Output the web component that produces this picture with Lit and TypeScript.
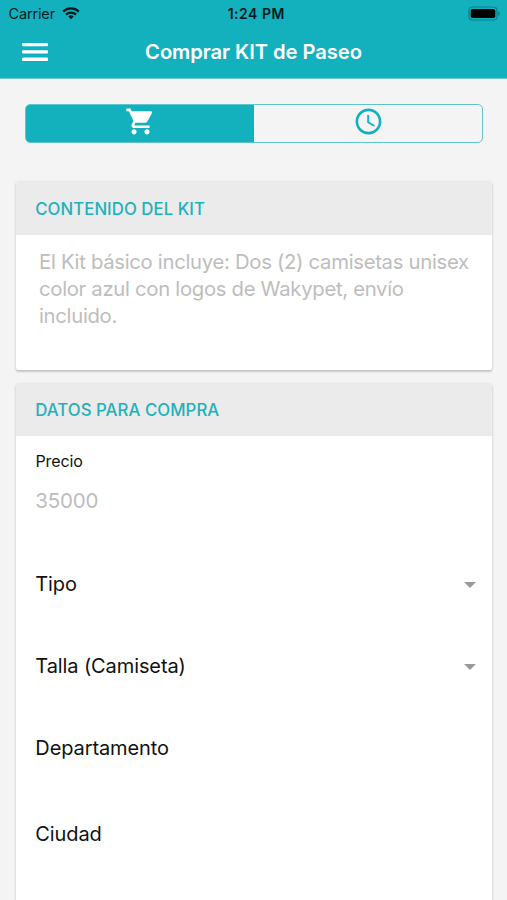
import { LitElement, html, css } from "lit";
import { customElement, property } from "lit/decorators.js";

@customElement("status-bar")
class StatusBar extends LitElement {
  static styles = css`
    :host {
      display: grid;
      grid-template-columns: 1fr auto 1fr;
      align-items: center;
      height: 27px;
      margin-bottom: 1px;
      padding: 0 6px 0 8.5px;
      font-size: 14.5px;
      color: #04191c;
    }
    .left { display: flex; align-items: center; gap: 7px; letter-spacing: -0.15px; }
    .time { font-weight: 600; font-size: 14px; letter-spacing: 0.5px; margin-left: 3px; }
    .right { display: flex; justify-content: flex-end; }
    svg { display: block; }
  `;
  render() {
    return html`
      <div class="left">
        <span>Carrier</span>
        <svg width="18" height="13" viewBox="0 0 18 13" fill="none" stroke="currentColor" stroke-width="2.3">
          <path d="M1.2 4.6a11.2 11.2 0 0 1 15.6 0" />
          <path d="M4 7.6a7.2 7.2 0 0 1 10 0" />
          <path d="M9 12.3 6.3 9.6a3.9 3.9 0 0 1 5.4 0Z" fill="currentColor" stroke="none" />
        </svg>
      </div>
      <span class="time">1:24 PM</span>
      <div class="right">
        <svg width="33" height="15" viewBox="0 0 33 15">
          <rect x="1" y="1" width="28" height="13" rx="3.5" fill="none" stroke="#0b7f89" stroke-width="1.2" />
          <rect x="2.7" y="3" width="24.6" height="9" rx="1.8" fill="#000" />
          <path d="M30.4 5.2c2 .6 2 4 0 4.6z" fill="#0b7f89" />
        </svg>
      </div>
    `;
  }
}

@customElement("info-card")
class InfoCard extends LitElement {
  @property() heading = "";
  static styles = css`
    :host {
      display: block;
      background: #fff;
      border-radius: 2px;
      overflow: hidden;
      box-shadow: 0 2px 2px rgba(0, 0, 0, 0.16), 0 0 3px rgba(0, 0, 0, 0.13);
    }
    .heading {
      background: #ebebeb;
      color: #22b1bb;
      font-size: 16.8px;
      font-weight: 500;
      height: var(--heading-height, 53px);
      display: flex;
      align-items: center;
      padding-left: 19.2px;
      letter-spacing: 0.05px;
      box-sizing: border-box;
    }
  `;
  render() {
    return html`<div class="heading"><span>${this.heading}</span></div><slot></slot>`;
  }
}

@customElement("app-root")
class AppRoot extends LitElement {
  static styles = css`
    :host {
      display: flex;
      flex-direction: column;
      height: 900px;
      overflow: hidden;
      background: #f4f4f4;
      font-family: Inter, "Liberation Sans", sans-serif;
      color: #111;
    }
    svg { display: block; }
    header { background: #13b1be; height: 79px; flex: none; box-sizing: border-box; border-bottom: 1px solid #6ccbd2; }
    .bar {
      display: grid;
      grid-template-columns: 60px 1fr 60px;
      align-items: center;
      height: 48px;
    }
    .menu { padding-left: 22px; }
    .title { text-align: center; color: #fff; font-size: 20.2px; font-weight: 600; letter-spacing: -0.06px; white-space: nowrap; padding-bottom: 2px; }
    .segment {
      display: grid;
      grid-template-columns: 1fr 1fr;
      flex: none;
      height: 39px;
      margin: 25px 24px 0 25px;
      border: 1.5px solid #5fc5cc;
      border-radius: 5px;
      box-sizing: border-box;
      overflow: hidden;
    }
    .tab { display: flex; justify-content: center; align-items: center; padding-bottom: 4px; color: #13b1be; }
    .tab.active { background: #13b1be; color: #fff; padding-left: 1px; }
    .kit { margin: 39px 15px 0 16px; height: 188px; flex: none; }
    .form { margin: 14px 15px 0 16px; height: 540px; flex: none; --heading-height: 52px; }
    .desc { margin: 14px 0 0 23px; font-size: 20.3px; line-height: 26.8px; letter-spacing: -0.3px; color: #bdbdbd; white-space: nowrap; }
    .label { padding: 15px 19.5px 0; font-size: 16px; line-height: 20px; letter-spacing: -0.1px; }
    .value { padding: 10px 19.3px 0; font-size: 20.5px; line-height: 39px; height: 62px; letter-spacing: -0.2px; color: #bdbdbd; }
    .row { display: flex; align-items: center; justify-content: space-between; height: 82px; padding: 0 16px 0 19.3px; font-size: 20px; letter-spacing: -0.1px; }
    .row span { padding-bottom: 1px; }
    .row svg { margin-top: 2px; }
    .row.tall { height: 91px; }
  `;
  render() {
    const arrow = html`<svg width="12" height="6" viewBox="0 0 12 6"><path d="M0 0h12L6 6z" fill="#999" /></svg>`;
    return html`
      <header>
        <status-bar></status-bar>
        <div class="bar">
          <div class="menu">
            <svg width="26" height="18" viewBox="0 0 26 18" fill="#fff">
              <rect width="26" height="3.3" rx="1" />
              <rect y="7.3" width="26" height="3.3" rx="1" />
              <rect y="14.6" width="26" height="3.3" rx="1" />
            </svg>
          </div>
          <div class="title">Comprar KIT de Paseo</div>
        </div>
      </header>
      <div class="segment">
        <div class="tab active">
          <svg width="31" height="31" viewBox="0 0 24 24" fill="currentColor">
            <path d="M7 18c-1.1 0-1.99.9-1.99 2S5.9 22 7 22s2-.9 2-2-.9-2-2-2zM1 2v2h2l3.6 7.59-1.35 2.45c-.16.28-.25.61-.25.96 0 1.1.9 2 2 2h12v-2H7.42c-.14 0-.25-.11-.25-.25l.03-.12.9-1.63h7.45c.75 0 1.41-.41 1.75-1.03l3.58-6.49c.08-.14.12-.31.12-.48 0-.55-.45-1-1-1H5.21l-.94-2H1zm16 16c-1.1 0-1.99.9-1.99 2s.89 2 1.99 2 2-.9 2-2-.9-2-2-2z" />
          </svg>
        </div>
        <div class="tab">
          <svg width="31" height="31" viewBox="0 0 24 24" fill="currentColor">
            <path d="M11.99 2C6.47 2 2 6.48 2 12s4.47 10 9.99 10C17.52 22 22 17.52 22 12S17.52 2 11.99 2zM12 20c-4.42 0-8-3.58-8-8s3.58-8 8-8 8 3.58 8 8-3.58 8-8 8zm.5-13H11v6l5.25 3.15.75-1.23-4.5-2.67z" />
          </svg>
        </div>
      </div>
      <info-card class="kit" heading="CONTENIDO DEL KIT">
        <div class="desc">
          El Kit básico incluye: Dos (2) camisetas unisex<br />color azul con logos de Wakypet, envío<br />incluido.
        </div>
      </info-card>
      <info-card class="form" heading="DATOS PARA COMPRA">
        <div class="label">Precio</div>
        <div class="value">35000</div>
        <div class="row"><span>Tipo</span>${arrow}</div>
        <div class="row"><span>Talla (Camiseta)</span>${arrow}</div>
        <div class="row"><span>Departamento</span></div>
        <div class="row tall"><span>Ciudad</span></div>
      </info-card>
    `;
  }
}
